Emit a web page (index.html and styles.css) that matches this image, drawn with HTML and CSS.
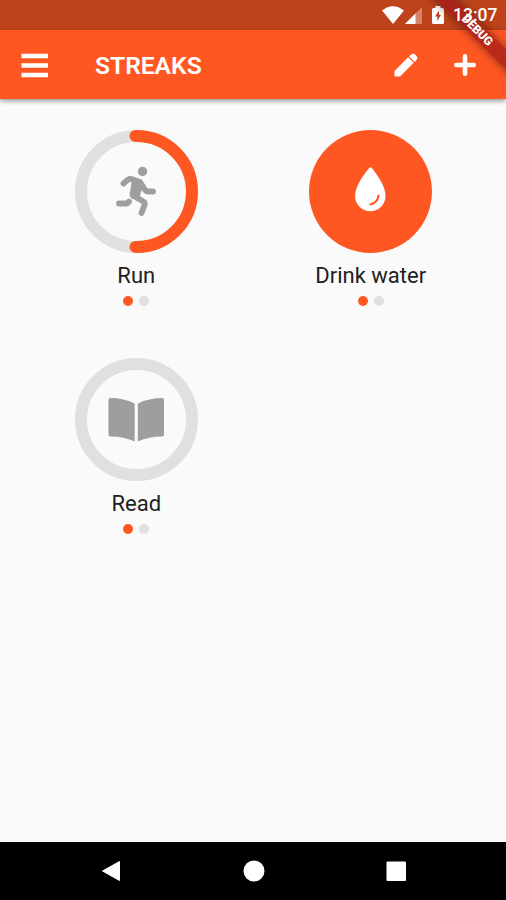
FILE: index.html
```html
<!DOCTYPE html>
<html>
<head>
  <meta charset="utf-8">
  <title>Streaks</title>
  <link rel="stylesheet" href="styles.css">
</head>
<body>
  <div class="status-bar">
    <svg class="wifi" width="22" height="18" viewBox="0 0 22 18">
      <path d="M0 4.5Q11 -4 22 4.5L11 18Z" fill="#fff"/>
    </svg>
    <svg class="signal" width="17" height="18" viewBox="0 0 17 18">
      <path d="M0 18L17 1V18Z" fill="#fff" opacity=".35"/>
      <path d="M0 18L10.5 7.5V18Z" fill="#fff"/>
    </svg>
    <svg class="battery" width="12" height="18" viewBox="0 0 12 18">
      <path d="M3.5 0H8.5V2H10.5Q12 2 12 3.5V16.5Q12 18 10.5 18H1.5Q0 18 0 16.5V3.5Q0 2 1.5 2H3.5Z" fill="#fff"/>
      <path d="M7 4.5L3 10.5H5.3V15L9 8.8H7Z" fill="#bf431a"/>
    </svg>
    <span class="time">13:07</span>
  </div>

  <div class="app-bar">
    <svg class="menu" width="27" height="25" viewBox="0 0 27 25">
      <path d="M.5 3H27M.5 12.5H27M.5 22H27" stroke="#fff" stroke-width="4.7"/>
    </svg>
    <h1>STREAKS</h1>
    <svg class="edit" width="24" height="24" viewBox="0 0 24 24">
      <path d="M.5 18L14.2 4.3L19.7 9.8L6 23.5H1.5Q.5 23.5 .5 22.5Z" fill="#fff"/>
      <path d="M15.1 3.4L17 1.5Q19 -.2 21 1.5L22.5 3Q24.2 5 22.5 7L20.6 8.9Z" fill="#fff"/>
    </svg>
    <svg class="add" width="22" height="22" viewBox="0 0 22 22">
      <path d="M11 2.3V19.7M2.3 11H19.7" stroke="#fff" stroke-width="4.6" stroke-linecap="round"/>
    </svg>
  </div>

  <div class="streaks">
    <div class="streak">
      <svg width="123" height="123" viewBox="0 0 123 123">
        <circle class="track" cx="61.5" cy="61.5" r="55.5"/>
        <path class="progress" d="M60.5 6H61.5A55.5 55.5 0 0 1 61.5 117H60.5"/>
        <circle cx="67.5" cy="41.5" r="4.7" fill="#9e9e9e"/>
        <g class="runner">
          <path d="M48.5 53.5L53 49.5Q55 48.5 58 49.5L65 52L70.5 60.5Q71.5 61.5 73 61.5H78"/>
          <path d="M44 73.5H51Q53 73.5 54 71.5"/>
          <path d="M59 66L67.5 71Q70.5 72.5 69.5 75L66.5 83"/>
        </g>
        <path d="M57 49L69 54.5L66 62L64 69L57 69Q53 66 55.5 60Z" fill="#9e9e9e"/>
      </svg>
      <p>Run</p>
      <div class="dots"><i class="done"></i><i></i></div>
    </div>

    <div class="streak">
      <svg width="123" height="123" viewBox="0 0 123 123">
        <circle cx="61.5" cy="61.5" r="61.5" fill="#ff5722"/>
        <path d="M60.2 38Q61.5 36.3 62.8 38Q76.5 55 76.5 66A15.2 15.2 0 0 1 46.1 66Q46.1 55 60.2 38Z" fill="#fff"/>
        <path d="M69.5 65.5Q68.5 73 61.5 74.3" fill="none" stroke="#ff5722" stroke-width="2" stroke-linecap="round"/>
      </svg>
      <p>Drink water</p>
      <div class="dots"><i class="done"></i><i></i></div>
    </div>

    <div class="streak">
      <svg width="123" height="123" viewBox="0 0 123 123">
        <circle class="track" cx="61.5" cy="61.5" r="55.5"/>
        <path d="M35.5 40Q48.5 40 59.7 45.5V83.5Q48.5 78.5 35.5 78.5Q33.5 78.5 33.5 76.5V42Q33.5 40 35.5 40Z" fill="#9e9e9e"/>
        <path d="M87 40Q74 40 62.8 45.5V83.5Q74 78.5 87 78.5Q89 78.5 89 76.5V42Q89 40 87 40Z" fill="#9e9e9e"/>
      </svg>
      <p>Read</p>
      <div class="dots"><i class="done"></i><i></i></div>
    </div>
  </div>

  <div class="nav-bar">
    <svg width="22" height="22" viewBox="0 0 22 22">
      <path d="M2.5 11L19.5 1.5V20.5Z" fill="#fff" stroke="#fff" stroke-linejoin="round"/>
    </svg>
    <svg width="22" height="22" viewBox="0 0 22 22">
      <circle cx="11" cy="11" r="10.5" fill="#fff"/>
    </svg>
    <svg width="22" height="22" viewBox="0 0 22 22">
      <rect x="1.5" y="1.5" width="19.5" height="19.5" rx="1" fill="#fff"/>
    </svg>
  </div>

  <div class="debug-corner">
    <div class="debug">DEBUG</div>
  </div>
</body>
</html>
```

FILE: styles.css
```css
body {
  margin: 0;
  height: 900px;
  display: flex;
  flex-direction: column;
  background-color: #fafafa;
  font-family: Roboto, sans-serif;
  overflow: hidden;
}

svg {
  display: block;
  flex: none;
}

.status-bar {
  height: 30px;
  display: flex;
  align-items: center;
  justify-content: flex-end;
  padding-right: 9px;
  box-sizing: border-box;
  background-color: #bf431a;
}

.wifi {
  margin-right: 1px;
}

.signal {
  margin-right: 10px;
}

.battery {
  margin-right: 9px;
}

/* stays readable over the ribbon */
.time {
  position: relative;
  z-index: 1;
  width: 44px;
  font-size: 17.5px;
  font-weight: 500;
  line-height: 32px;
  color: #fff;
  white-space: nowrap;
}

.app-bar {
  height: 69px;
  display: flex;
  align-items: center;
  padding: 1px 30px 0 21px;
  box-sizing: border-box;
  background-color: #ff5722;
  box-shadow: 0 2px 5px rgba(0, 0, 0, 0.4);
}

.app-bar h1 {
  flex: 1;
  margin: 0 0 0 47px;
  font-size: 24.6px;
  font-weight: 600;
  color: #fff;
}

.edit {
  margin-right: 36px;
}

.streaks {
  flex: 1;
  display: grid;
  grid-template-columns: 1fr 1fr;
  grid-auto-rows: 228px;
  align-content: start;
  padding: 31px 18px 0 19px;
}

.streak {
  display: flex;
  flex-direction: column;
  align-items: center;
}

.streak p {
  margin: 9px 0 0;
  font-size: 22px;
  line-height: 27px;
  color: #212121;
}

.track {
  fill: none;
  stroke: #e0e0e0;
  stroke-width: 12;
}

.progress {
  fill: none;
  stroke: #ff5722;
  stroke-width: 12;
  stroke-linecap: round;
}

.runner {
  fill: none;
  stroke: #9e9e9e;
  stroke-width: 5.8;
  stroke-linecap: round;
  stroke-linejoin: round;
}

.dots {
  display: flex;
  gap: 6px;
  margin-top: 7px;
}

.dots i {
  width: 10px;
  height: 10px;
  border-radius: 50%;
  background-color: #e0e0e0;
}

.dots .done {
  background-color: #ff5722;
}

.nav-bar {
  height: 58px;
  display: flex;
  align-items: center;
  justify-content: space-between;
  padding: 0 99px 0 100px;
  background-color: #000;
}

/* ribbon across the top right corner */
.debug-corner {
  position: absolute;
  top: 0;
  right: 0;
  width: 90px;
  height: 90px;
  overflow: hidden;
}

.debug {
  position: absolute;
  top: 23px;
  left: 1px;
  width: 120px;
  height: 15px;
  transform: rotate(45deg);
  background-color: rgba(160, 24, 24, 0.72);
  box-shadow: 0 0 8px rgba(0, 0, 0, 0.5);
  color: #fff;
  font-size: 12px;
  font-weight: 900;
  line-height: 15px;
  text-align: center;
}
```
